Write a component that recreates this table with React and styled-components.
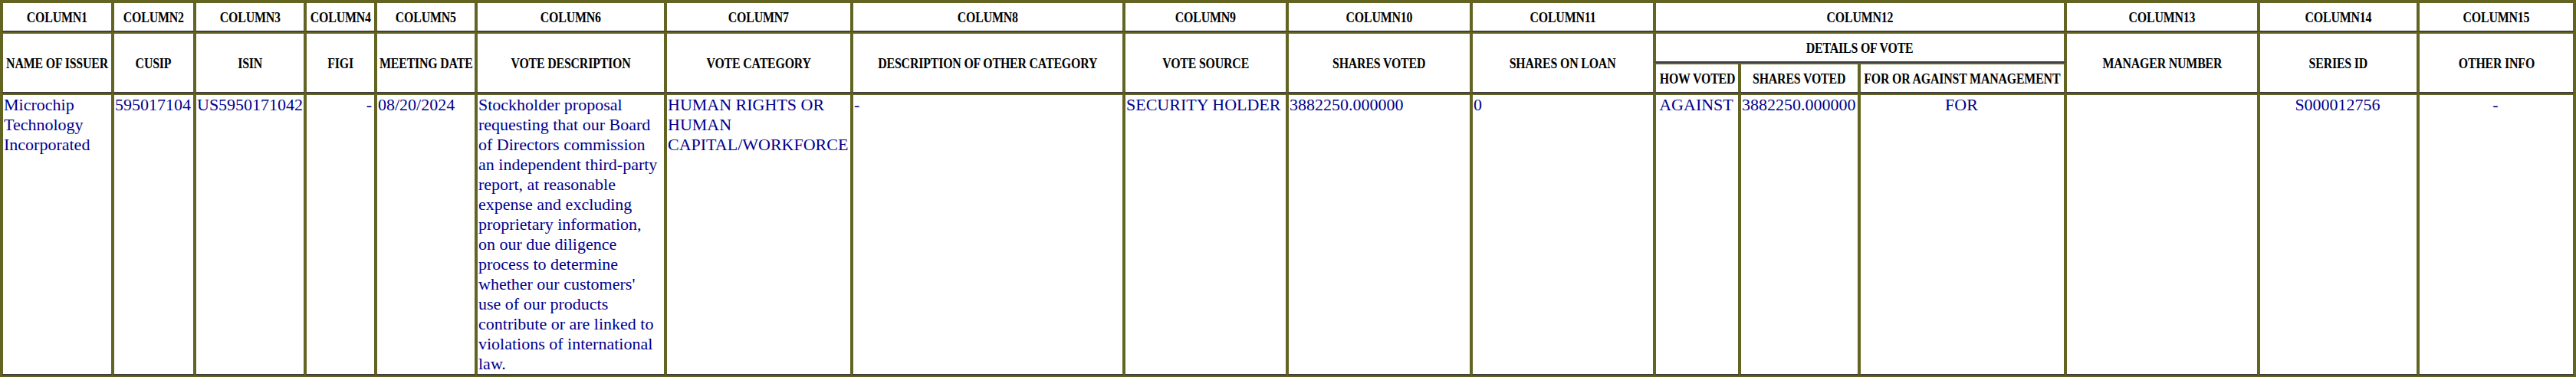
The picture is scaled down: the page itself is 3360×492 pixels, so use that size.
import React from 'react';
import styled, { createGlobalStyle } from 'styled-components';

const olive = '#636322';
const rule = '#3f3f3f';
const ink = '#00008c';
const serif = '"Liberation Serif", "Times New Roman", serif';

const GlobalStyle = createGlobalStyle`
    html, body {
        margin: 0;
        padding: 0;
        background: #ffffff;
    }
`;

// track widths of the 17 grid columns (column 12 is split in three)
const tracks = [145, 107, 144, 92, 131, 247, 243, 355, 213, 240, 239, 111, 156, 269, 252, 208, 204];

const VoteTable = styled.div`
    display: grid;
    box-sizing: border-box;
    width: 3360px;
    grid-template-columns: ${tracks.map(w => `${w}px`).join(' ')};
    grid-template-rows: 40px 40px 40px 368px;
    border: 2px solid ${olive};
    background: #ffffff;
`;

const Cell = styled.div`
    box-sizing: border-box;
    min-width: 0;
    grid-column: ${p => p.$col} / span ${p => p.$span || 1};
    grid-row: ${p => p.$row} / span ${p => p.$rows || 1};
    border: 2px solid ${olive};
    border-bottom-color: ${rule};
`;

const HeadCell = styled(Cell)`
    display: flex;
    align-items: center;
    justify-content: center;
    font-family: ${serif};
    font-weight: bold;
    font-size: 19px;
    line-height: 1;
    white-space: nowrap;
    color: #000000;
`;

// the heading face in the form is a narrow bold serif
const Narrow = styled.span`
    display: inline-block;
    flex-shrink: 0;
    transform: scaleX(0.835);
    letter-spacing: -0.2px;
`;

const DataCell = styled(Cell)`
    padding: 0 3px 0 1px;
    font-family: ${serif};
    font-size: 22px;
    line-height: 26px;
    color: ${ink};
    text-align: ${p => p.$align || 'left'};
`;

// columns 1-11 sit in tracks 1-11, column 13-15 in tracks 15-17
const plainColumns = [
    { num: 1, track: 1, label: 'NAME OF ISSUER', value: 'Microchip Technology Incorporated' },
    { num: 2, track: 2, label: 'CUSIP', value: '595017104' },
    { num: 3, track: 3, label: 'ISIN', value: 'US5950171042' },
    { num: 4, track: 4, label: 'FIGI', value: '-', align: 'right' },
    { num: 5, track: 5, label: 'MEETING DATE', value: '08/20/2024' },
    {
        num: 6,
        track: 6,
        label: 'VOTE DESCRIPTION',
        value: "Stockholder proposal requesting that our Board of Directors commission an independent third-party report, at reasonable expense and excluding proprietary information, on our due diligence process to determine whether our customers' use of our products contribute or are linked to violations of international law.",
    },
    { num: 7, track: 7, label: 'VOTE CATEGORY', value: 'HUMAN RIGHTS OR HUMAN CAPITAL/WORKFORCE' },
    { num: 8, track: 8, label: 'DESCRIPTION OF OTHER CATEGORY', value: '-' },
    { num: 9, track: 9, label: 'VOTE SOURCE', value: 'SECURITY HOLDER' },
    { num: 10, track: 10, label: 'SHARES VOTED', value: '3882250.000000' },
    { num: 11, track: 11, label: 'SHARES ON LOAN', value: '0' },
    { num: 13, track: 15, label: 'MANAGER NUMBER', value: '' },
    { num: 14, track: 16, label: 'SERIES ID', value: 'S000012756', align: 'center' },
    { num: 15, track: 17, label: 'OTHER INFO', value: '-', align: 'center' },
];

const voteDetails = [
    { track: 12, label: 'HOW VOTED', value: 'AGAINST' },
    { track: 13, label: 'SHARES VOTED', value: '3882250.000000' },
    { track: 14, label: 'FOR OR AGAINST MANAGEMENT', value: 'FOR' },
];

function App() {
    return (
        <>
            <GlobalStyle />
            <VoteTable>
                {plainColumns.map(c => (
                    <HeadCell key={`n${c.num}`} $col={c.track} $row={1}>
                        <Narrow>COLUMN{c.num}</Narrow>
                    </HeadCell>
                ))}
                <HeadCell $col={12} $span={3} $row={1}><Narrow>COLUMN12</Narrow></HeadCell>

                {plainColumns.map(c => (
                    <HeadCell key={`l${c.num}`} $col={c.track} $row={2} $rows={2}>
                        <Narrow>{c.label}</Narrow>
                    </HeadCell>
                ))}
                <HeadCell $col={12} $span={3} $row={2}><Narrow>DETAILS OF VOTE</Narrow></HeadCell>
                {voteDetails.map(d => (
                    <HeadCell key={`h${d.track}`} $col={d.track} $row={3}>
                        <Narrow>{d.label}</Narrow>
                    </HeadCell>
                ))}

                {plainColumns.map(c => (
                    <DataCell key={`v${c.num}`} $col={c.track} $row={4} $align={c.align}>{c.value}</DataCell>
                ))}
                {voteDetails.map(d => (
                    <DataCell key={`d${d.track}`} $col={d.track} $row={4} $align="center">{d.value}</DataCell>
                ))}
            </VoteTable>
        </>
    );
}

export default App;
